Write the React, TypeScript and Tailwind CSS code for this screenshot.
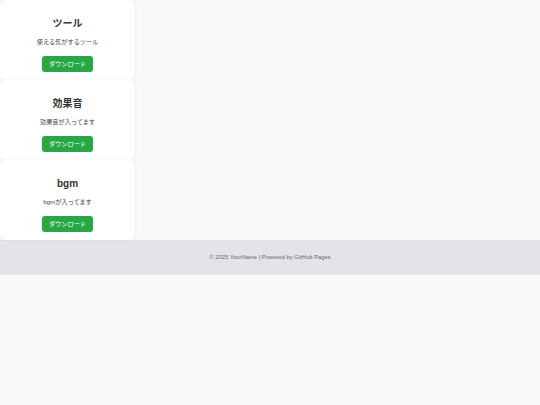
const ITEMS = [
  { title: 'ツール', desc: '使える気がするツール' },
  { title: '効果音', desc: '効果音が入ってます' },
  { title: 'bgm', desc: 'bgmが入ってます' },
]

const FONT = { fontFamily: '"Liberation Sans", "Noto Sans CJK JP", sans-serif' }

export default function App() {
  return (
    <div className="min-h-[405px] bg-[#f7f8fa] text-[#333]" style={FONT}>
      <main className="flex flex-col w-[135px]">
        {ITEMS.map((item) => (
          <div
            key={item.title}
            className="h-[80px] bg-white rounded-[6px] shadow-[0_0_3px_rgba(0,0,0,0.08)] flex flex-col items-center pt-[16px]"
          >
            <h2 className="text-[10px] leading-[16px] font-bold text-[#333]">{item.title}</h2>
            <p className="mt-[5px] text-[6.2px] leading-[10px] text-[#444]">{item.desc}</p>
            <button className="mt-[9px] w-[51px] h-[16px] rounded-[3px] bg-[#28a745] text-white text-[6.2px] leading-[16px]">
              ダウンロード
            </button>
          </div>
        ))}
      </main>
      <footer className="h-[35px] bg-[#e3e4e7] flex items-center justify-center text-[5.85px] text-[#666]">
        © 2025 YourName | Powered by GitHub Pages
      </footer>
    </div>
  )
}
